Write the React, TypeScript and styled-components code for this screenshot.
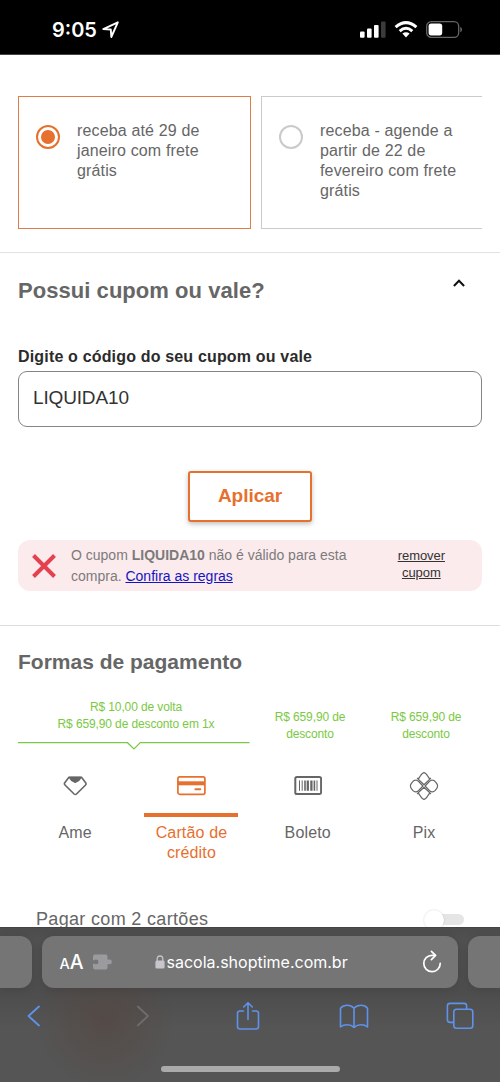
import React from "react";
import styled, { createGlobalStyle } from "styled-components";

const ORANGE = "#e6702e";
const GRAY = "#666666";
const GREEN = "#7ac943";
const BLUE = "#5f92ea";

const GlobalStyle = createGlobalStyle`
  * { box-sizing: border-box; }
  body {
    margin: 0;
    background: #fff;
    font-family: "Liberation Sans", Arial, sans-serif;
    color: ${GRAY};
  }
  h2, p { margin: 0; }
  svg { display: block; flex: none; }
`;

const Screen = styled.div`
  width: 500px;
  height: 1082px;
  overflow: hidden;
  display: flex;
  flex-direction: column;
  background: #fff;
`;

const StatusBar = styled.header`
  height: 55px;
  flex: none;
  background: #000;
  border-bottom: 1px solid #444;
  display: flex;
  align-items: center;
  justify-content: space-between;
  padding: 5px 37px 0 52px;
`;

const StatusGroup = styled.div<{ $gap: number }>`
  display: flex;
  align-items: center;
  gap: ${(p) => p.$gap}px;
`;

const Clock = styled.span`
  font-family: Inter, sans-serif;
  font-weight: 600;
  font-size: 20px;
  line-height: 24px;
  letter-spacing: 0;
  color: #fff;
`;

const Delivery = styled.section`
  height: 198px;
  flex: none;
  padding: 41px 18px 0 18px;
  border-bottom: 1px solid #e2e2e2;
`;

const DeliveryList = styled.div`
  display: flex;
  gap: 10px;
  overflow: hidden;
`;

const DeliveryCard = styled.label<{ $selected?: boolean }>`
  display: flex;
  flex: none;
  width: 233px;
  height: 133px;
  padding: 24px 0 0 17px;
  gap: 17px;
  border: ${(p) => (p.$selected ? "1px solid #dd7d49" : "1px solid #cbcbcb")};
`;

const Radio = styled.span<{ $selected?: boolean }>`
  width: 24px;
  height: 24px;
  margin-top: 4px;
  flex: none;
  border-radius: 50%;
  border: 2px solid ${(p) => (p.$selected ? ORANGE : "#cacaca")};
  display: flex;
  align-items: center;
  justify-content: center;
  &::after {
    content: "";
    width: 14px;
    height: 14px;
    border-radius: 50%;
    background: ${(p) => (p.$selected ? ORANGE : "transparent")};
  }
`;

const DeliveryText = styled.span`
  font-size: 16px;
  line-height: 20px;
  letter-spacing: 0.15px;
  white-space: nowrap;
`;

const Coupon = styled.section`
  height: 373px;
  flex: none;
  padding: 23px 18px 0 18px;
  border-bottom: 1px solid #dedede;
  display: flex;
  flex-direction: column;
`;

const SectionHead = styled.div`
  display: flex;
  justify-content: space-between;
  padding-right: 17px;
`;

const Title = styled.h2<{ $size: number; $spacing: number }>`
  font-size: ${(p) => p.$size}px;
  line-height: 30px;
  letter-spacing: ${(p) => p.$spacing}px;
  font-weight: 700;
`;

const FieldLabel = styled.label`
  margin-top: 41px;
  font-size: 16px;
  line-height: 20px;
  font-weight: 700;
  letter-spacing: 0.17px;
  color: #2b2b2b;
`;

const Field = styled.input`
  margin-top: 4px;
  height: 56px;
  flex: none;
  border: 1px solid #858585;
  border-radius: 9px;
  padding: 0 15px 3px 14px;
  font-family: inherit;
  font-size: 19px;
  letter-spacing: -0.15px;
  color: #333;
  outline: none;
  background: #fff;
`;

const ApplyButton = styled.button`
  align-self: center;
  margin-top: 44px;
  width: 124px;
  height: 51px;
  flex: none;
  border: 2px solid ${ORANGE};
  border-radius: 3px;
  background: #fff;
  color: ${ORANGE};
  font-family: inherit;
  font-size: 19px;
  font-weight: 700;
  padding: 0 0 1px;
  letter-spacing: -0.05px;
  box-shadow: 0 2px 5px rgba(0, 0, 0, 0.25);
`;

const Alert = styled.div`
  margin-top: 18px;
  height: 51px;
  flex: none;
  display: flex;
  align-items: center;
  border-radius: 12px;
  background: #fbebed;
  padding: 0 37px 0 14px;
`;

const AlertText = styled.p`
  margin-left: 15px;
  flex: 1;
  font-size: 14px;
  line-height: 21px;
  color: #7b7b7b;
  white-space: nowrap;
`;

const RulesLink = styled.a`
  color: #1414c4;
  text-decoration: underline;
`;

const RemoveLink = styled.a`
  font-size: 13px;
  line-height: 17px;
  letter-spacing: -0.05px;
  text-align: center;
  color: #333;
  text-decoration: underline;
  margin-bottom: 3px;
`;

const Payment = styled.section`
  height: 301px;
  flex: none;
  overflow: hidden;
  padding: 21px 18px 0 17px;
`;

const PaymentTitle = styled(Title)`
  padding-left: 1px;
`;

const Benefits = styled.div`
  display: grid;
  grid-template-columns: 233px 116px 116px;
  height: 72px;
  margin-top: 22px;
`;

const Benefit = styled.p<{ $top?: number; $left?: number }>`
  font-size: 12px;
  line-height: 16.5px;
  letter-spacing: -0.12px;
  text-align: center;
  color: ${GREEN};
  padding: ${(p) => p.$top ?? 0}px 0 0 ${(p) => p.$left ?? 0}px;
  white-space: nowrap;
`;

const BenefitLine = styled.svg`
  margin-top: 9px;
  margin-left: -3px;
`;

const Methods = styled.div`
  display: grid;
  grid-template-columns: repeat(4, 116.3px);
`;

const Method = styled.div<{ $active?: boolean }>`
  display: flex;
  flex-direction: column;
  align-items: center;
  text-align: center;
  font-size: 16px;
  line-height: 20px;
  letter-spacing: 0.15px;
  color: ${(p) => (p.$active ? ORANGE : GRAY)};
`;

const MethodIcon = styled.div<{ $active?: boolean }>`
  width: 94px;
  height: 46px;
  margin-bottom: 6px;
  display: flex;
  justify-content: center;
  align-items: flex-start;
  border-bottom: 4px solid ${(p) => (p.$active ? ORANGE : "transparent")};
`;

const TwoCards = styled.div`
  display: flex;
  justify-content: space-between;
  align-items: center;
  margin-top: 44px;
  padding: 0 18px 0 19px;
  font-size: 18px;
  line-height: 24px;
  letter-spacing: 0.33px;
`;

const Switch = styled.span`
  width: 40px;
  height: 20px;
  display: flex;
  align-items: center;
  margin-top: 1px;
`;

const SwitchThumb = styled.span`
  width: 20px;
  height: 20px;
  border-radius: 50%;
  background: #fff;
  box-shadow: 0 0 2px rgba(0, 0, 0, 0.18);
  z-index: 1;
`;

const SwitchTrack = styled.span`
  width: 28px;
  height: 11px;
  margin-left: -8px;
  border-radius: 6px;
  background: #e5e5e5;
`;

const Browser = styled.footer`
  flex: 1;
  background:
    radial-gradient(circle at 105px 92px, rgba(84, 68, 62, 0.6), rgba(84, 68, 62, 0) 70px),
    linear-gradient(#4c4c4c 0, #515151 12px, #4d4d4d 64px, #555 100px, #555 100%);
  border-top: 1px solid #444;
  display: flex;
  flex-direction: column;
  align-items: center;
`;

const Tabs = styled.div`
  width: 500px;
  margin-top: 8px;
  display: flex;
  gap: 10px;
`;

const SideTab = styled.div<{ $side: "left" | "right" }>`
  width: ${(p) => (p.$side === "left" ? 32 : 33)}px;
  height: 52px;
  background: #757575;
  border-radius: ${(p) => (p.$side === "left" ? "0 12px 12px 0" : "12px 0 0 12px")};
  box-shadow: 0 1px 8px rgba(0, 0, 0, 0.12);
`;

const AddressBar = styled.div`
  width: 416px;
  height: 52px;
  flex: none;
  display: flex;
  align-items: center;
  padding: 0 16px 0 18px;
  border-radius: 12px;
  background: #757575;
  box-shadow: 0 1px 8px rgba(0, 0, 0, 0.12);
  color: #fff;
  font-family: Inter, sans-serif;
`;

const TextSize = styled.span`
  display: flex;
  align-items: baseline;
  width: 33px;
  margin-top: 1px;
  font-size: 19.5px;
  font-weight: 500;
  line-height: 24px;
  small { font-size: 14.5px; }
`;

const Url = styled.span`
  margin-left: 2px;
  flex: 1;
  font-size: 16px;
  line-height: 24px;
  white-space: nowrap;
`;

const LockSlot = styled.span`
  margin-left: 42px;
`;

const Toolbar = styled.nav`
  width: 500px;
  height: 32px;
  margin-top: 12px;
  padding-left: 26px;
  display: grid;
  grid-template-columns: 109px 101px 103px 107px 28px;
  align-items: center;
`;

const HomeBar = styled.div`
  width: 179px;
  height: 6px;
  margin-top: 34px;
  border-radius: 3px;
  background: #aaa;
`;

const LocationArrow = () => (
  <svg width="18" height="18" viewBox="0 0 18 18" fill="none" stroke="#fff" strokeWidth="1.9" strokeLinejoin="round">
    <path d="M1.3 8.1 15.8 1.3 9.3 16 8.8 8.5Z" />
  </svg>
);

const Signal = () => (
  <svg width="26" height="17" viewBox="0 0 26 17" fill="#fff">
    <rect x="0" y="10.5" width="4.6" height="6.2" rx="1" />
    <rect x="7" y="7.5" width="4.6" height="9.2" rx="1" />
    <rect x="14" y="4" width="4.6" height="12.7" rx="1" />
    <rect x="21" y="0.5" width="4.6" height="16.2" rx="1" fill="#3b3b3b" />
  </svg>
);

const Wifi = () => (
  <svg width="24" height="17" viewBox="0 0 24 17" fill="none" stroke="#fff" strokeWidth="3">
    <path d="M1.6 6.2Q12-3 22.4 6.2" />
    <path d="M5.7 10.1Q12 4.5 18.3 10.1" />
    <path d="M8.4 12.6Q12 9.8 15.6 12.6L12 16.5Z" fill="#fff" stroke="none" />
  </svg>
);

const Battery = () => (
  <svg width="37" height="17" viewBox="0 0 37 17">
    <rect x="0.7" y="0.7" width="32" height="15.6" rx="4.6" fill="none" stroke="#666" strokeWidth="1.3" />
    <rect x="2.6" y="2.6" width="13.6" height="11.8" rx="2.6" fill="#fff" />
    <path d="M34.3 6v5.2c2.3-.5 2.3-4.7 0-5.2Z" fill="#666" />
  </svg>
);

const Cross = () => (
  <svg width="24" height="26" viewBox="0 0 24 26" stroke="#e5404f" strokeWidth="4">
    <path d="M1.5 2.5 22.5 23.5M22.5 2.5 1.5 23.5" />
  </svg>
);

const ChevronSvg = styled.svg`
  margin-top: 3px;
`;

const ChevronUp = () => (
  <ChevronSvg width="12" height="8" viewBox="0 0 12 8" fill="none" stroke="#111" strokeWidth="2">
    <path d="M0.9 7 6 1.7 11.1 7" />
  </ChevronSvg>
);

const AmeIcon = () => (
  <svg width="26" height="30" viewBox="0 0 26 30" fill="none" stroke="#666" strokeWidth="1.6" strokeLinejoin="round">
    <path d="M6.9 6.3H19.5L24 12.2Q24.3 13.3 23.6 14L14.5 23Q13.3 24 12.1 23L3 14Q2.2 13.3 2.4 12.2Z" />
    <path d="M7.6 6.5H18.8Q17.2 9.4 14.6 10.4L13.2 11.3 11.8 10.4Q9.2 9.4 7.6 6.5Z" fill="#666" />
  </svg>
);

const CardIcon = () => (
  <svg width="30" height="30" viewBox="0 0 30 30" fill="none" stroke={ORANGE}>
    <rect x="1.9" y="5.9" width="27" height="17.4" rx="1.8" strokeWidth="1.7" />
    <path d="M1.9 12.3H29" strokeWidth="4" />
    <path d="M19.5 18.3h4.7" strokeWidth="2.1" strokeLinecap="round" />
  </svg>
);

const BarcodeIcon = () => (
  <svg width="28" height="30" viewBox="0 0 28 30" fill="none" stroke="#666">
    <rect x="1.3" y="6" width="25.8" height="17" rx="1.6" strokeWidth="2" />
    <path d="M5.5 9.4v10.4M8.2 9.4v10.4" strokeWidth="1" />
    <path d="M11 9.4v10.4M20.4 9.4v10.4" strokeWidth="1.6" />
    <path d="M13.8 9.4v10.4M17.4 9.4v10.4" strokeWidth="2.3" />
    <path d="M23 9.4v10.4" strokeWidth="1" />
  </svg>
);

const PixIcon = () => (
  <svg width="30" height="30" viewBox="0 0 30 30" fill="none" stroke="#666" strokeWidth="1.2" strokeLinejoin="round">
    <path d="M15 13.8 8.4 7.4H9.8L12 4 13.7 2.2Q15 1.2 16.3 2.2L18 4 20.2 7.4H21.6Z" />
    <path d="M15 16.2 8.4 22.6H9.8L12 26 13.7 27.8Q15 28.8 16.3 27.8L18 26 20.2 22.6H21.6Z" />
    <path d="M13.9 15 9.7 10.5Q8.3 9 6.6 9.1 5.2 9.1 4 10.4L2.2 12.6Q.7 15 2.2 17.4L4 19.6Q5.2 20.9 6.6 20.9 8.3 21 9.7 19.5Z" />
    <path d="M16.1 15 20.3 10.5Q21.7 9 23.4 9.1 24.8 9.1 26 10.4L27.8 12.6Q29.3 15 27.8 17.4L26 19.6Q24.8 20.9 23.4 20.9 21.7 21 20.3 19.5Z" />
  </svg>
);

const Puzzle = () => (
  <svg width="20" height="16" viewBox="0 0 20 16" fill="#9b9b9f">
    <path d="M2 .5h10.5Q14.5.5 14.5 2.5V5.6Q15.3 6 15.8 5.6 18.8 5 18.8 7.9T15.8 10.2Q15.3 9.8 14.5 10.2V13.5Q14.5 15.5 12.5 15.5H2Q0 15.5 0 13.5V9.8Q.8 9.2 1.7 10.1 5.5 10.8 5.5 7.9T1.7 5.7Q.8 6.6 0 6V2.5Q0 .5 2 .5Z" />
  </svg>
);

const Lock = () => (
  <svg width="10" height="14" viewBox="0 0 10 14">
    <rect x="0.4" y="5.6" width="9.2" height="8" rx="1.5" fill="#c6c6cb" />
    <path d="M2.2 6V4Q2.2 1 5 1T7.8 4V6" fill="none" stroke="#c6c6cb" strokeWidth="1.3" />
  </svg>
);

const Reload = () => (
  <svg width="20" height="24" viewBox="0 0 20 24" fill="none" stroke="#fff" strokeWidth="1.7" strokeLinecap="round" strokeLinejoin="round">
    <path d="M13 5.3H10A8.2 8.2 0 1 0 18.2 13.4" />
    <path d="M9.4 1.4 13.6 5.4 9.4 9.6" />
  </svg>
);

const Chevron = ({ forward }: { forward?: boolean }) => (
  <svg width="15" height="24" viewBox="0 0 15 24" fill="none" stroke={forward ? "#6d6d6d" : BLUE} strokeWidth="1.8" strokeLinecap="round" strokeLinejoin="round">
    <path d={forward ? "M2.8 2.5 13 12 2.8 21.5" : "M13 2.5 2.5 12 13 21.5"} />
  </svg>
);

const Share = () => (
  <svg width="24" height="30" viewBox="0 0 24 30" fill="none" stroke={BLUE} strokeWidth="1.6" strokeLinecap="round" strokeLinejoin="round">
    <path d="M7.5 10H4Q1.5 10 1.5 12.5V25.5Q1.5 28 4 28H20Q22.5 28 22.5 25.5V12.5Q22.5 10 20 10H16.5M12 18.5V1.8M7.7 6 12 1.7 16.3 6" />
  </svg>
);

const Book = () => (
  <svg width="30" height="26" viewBox="0 0 30 26" fill="none" stroke={BLUE} strokeWidth="1.6" strokeLinejoin="round">
    <path d="M15 5.2Q12.3 2.3 8.2 2.3T1.5 5.2V24Q4.2 21.8 8.2 21.8T15 24.4Q18 21.8 22 21.8T28.5 24V5.2Q26.3 2.3 22 2.3T15 5.2V24.4" />
  </svg>
);

const TabsIcon = () => (
  <svg width="28" height="28" viewBox="0 0 28 28" fill="none" stroke={BLUE} strokeWidth="1.6">
    <path d="M7.8 20.4H4Q1.4 20.4 1.4 17.8V4Q1.4 1.4 4 1.4H18Q20.6 1.4 20.6 4V7.2" />
    <rect x="7.8" y="7.2" width="19" height="19" rx="2.7" />
  </svg>
);

export default function App() {
  return (
    <Screen>
      <GlobalStyle />
      <StatusBar>
        <StatusGroup $gap={5}>
          <Clock>9:05</Clock>
          <LocationArrow />
        </StatusGroup>
        <StatusGroup $gap={8}>
          <Signal />
          <Wifi />
          <Battery />
        </StatusGroup>
      </StatusBar>

      <Delivery>
        <DeliveryList>
          <DeliveryCard $selected>
            <Radio $selected />
            <DeliveryText>receba até 29 de<br />janeiro com frete<br />grátis</DeliveryText>
          </DeliveryCard>
          <DeliveryCard>
            <Radio />
            <DeliveryText>receba - agende a<br />partir de 22 de<br />fevereiro com frete<br />grátis</DeliveryText>
          </DeliveryCard>
        </DeliveryList>
      </Delivery>

      <Coupon>
        <SectionHead>
          <Title $size={22} $spacing={0.05}>Possui cupom ou vale?</Title>
          <ChevronUp />
        </SectionHead>
        <FieldLabel htmlFor="cupom">Digite o código do seu cupom ou vale</FieldLabel>
        <Field id="cupom" defaultValue="LIQUIDA10" />
        <ApplyButton>Aplicar</ApplyButton>
        <Alert>
          <Cross />
          <AlertText>
            O cupom <b>LIQUIDA10</b> não é válido para esta<br />
            compra. <RulesLink>Confira as regras</RulesLink>
          </AlertText>
          <RemoveLink>remover<br />cupom</RemoveLink>
        </Alert>
      </Coupon>

      <Payment>
        <PaymentTitle $size={21} $spacing={0}>Formas de pagamento</PaymentTitle>
        <Benefits>
          <div>
            <Benefit $left={5}>R$ 10,00 de volta<br />R$ 659,90 de desconto em 1x</Benefit>
            <BenefitLine width="236" height="11" viewBox="0 0 236 11" fill="none" stroke={GREEN} strokeWidth="1.2">
              <path d="M4 1.7H113.5L120 8 126.3 1.7H235.5" />
            </BenefitLine>
          </div>
          <Benefit $top={10} $left={4}>R$ 659,90 de<br />desconto</Benefit>
          <Benefit $top={10} $left={4}>R$ 659,90 de<br />desconto</Benefit>
        </Benefits>
        <Methods>
          <Method>
            <MethodIcon><AmeIcon /></MethodIcon>
            Ame
          </Method>
          <Method $active>
            <MethodIcon $active><CardIcon /></MethodIcon>
            Cartão de<br />crédito
          </Method>
          <Method>
            <MethodIcon><BarcodeIcon /></MethodIcon>
            Boleto
          </Method>
          <Method>
            <MethodIcon><PixIcon /></MethodIcon>
            Pix
          </Method>
        </Methods>
        <TwoCards>
          Pagar com 2 cartões
          <Switch>
            <SwitchThumb />
            <SwitchTrack />
          </Switch>
        </TwoCards>
      </Payment>

      <Browser>
        <Tabs>
          <SideTab $side="left" />
          <AddressBar>
            <TextSize><small>A</small>A</TextSize>
            <Puzzle />
            <LockSlot><Lock /></LockSlot>
            <Url>sacola.shoptime.com.br</Url>
            <Reload />
          </AddressBar>
          <SideTab $side="right" />
        </Tabs>
        <Toolbar>
          <Chevron />
          <Chevron forward />
          <Share />
          <Book />
          <TabsIcon />
        </Toolbar>
        <HomeBar />
      </Browser>
    </Screen>
  );
}
